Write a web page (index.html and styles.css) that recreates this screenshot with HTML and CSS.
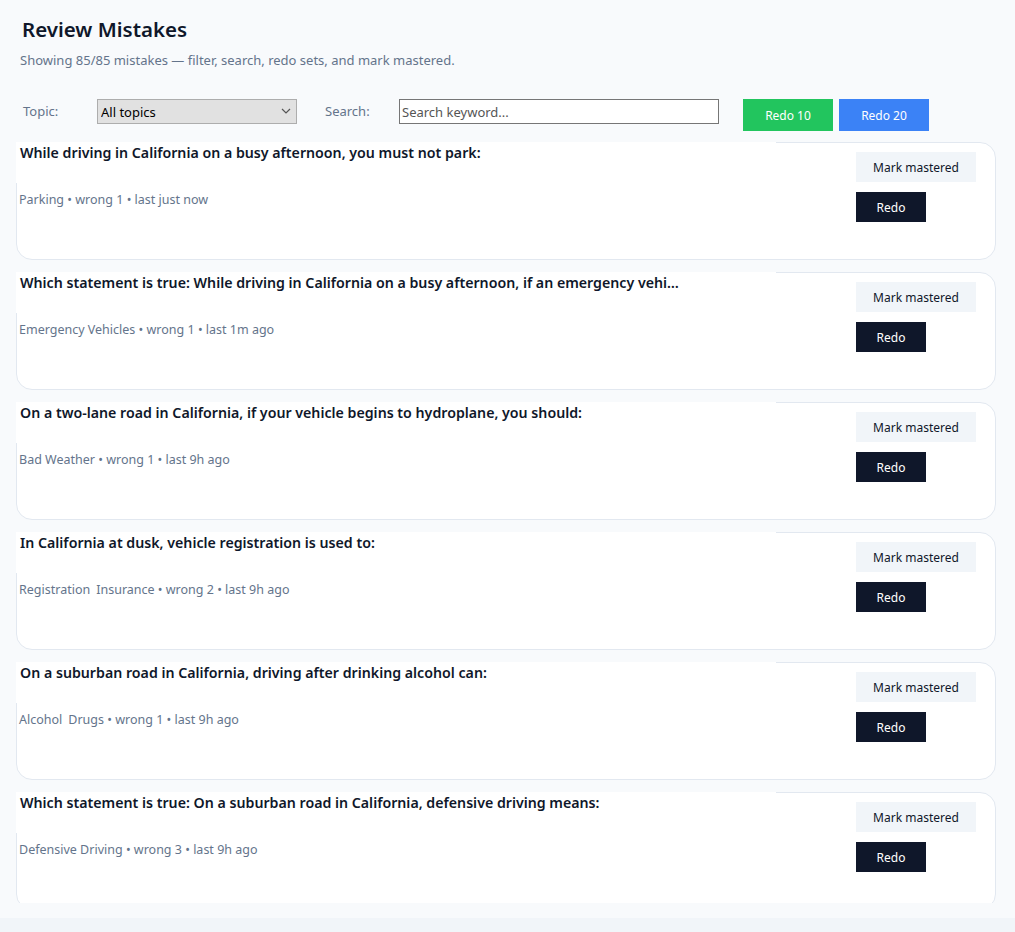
FILE: index.html
```html
<!DOCTYPE html>
<html lang="en">
<head>
<meta charset="utf-8">
<title>Review Mistakes</title>
<link rel="stylesheet" href="styles.css">
</head>
<body>
<div class="app">
  <header class="head">
    <h1 class="title">Review Mistakes</h1>
    <p class="subtitle">Showing 85/85 mistakes — filter, search, redo sets, and mark mastered.</p>
  </header>

  <div class="controls">
    <label class="ctl-label" for="topic">Topic:</label>
    <div class="select-wrap">
      <select id="topic" class="select">
        <option>All topics</option>
      </select>
      <svg class="chevron" width="10" height="6" viewBox="0 0 10 6" aria-hidden="true"><path d="M1 1l4 4 4-4" fill="none" stroke="#555" stroke-width="1.2"/></svg>
    </div>
    <label class="ctl-label search-label" for="q">Search:</label>
    <input id="q" class="search" type="text" placeholder="Search keyword...">
    <button class="btn btn-green">Redo 10</button>
    <button class="btn btn-blue">Redo 20</button>
  </div>

  <div class="list">
    <article class="card">
      <div class="card-main">
        <div class="q">While driving in California on a busy afternoon, you must not park:</div>
        <div class="meta"><span class="tag">Parking</span> • wrong 1 • last just now</div>
      </div>
      <div class="actions">
        <button class="btn-mark">Mark mastered</button>
        <button class="btn-redo">Redo</button>
      </div>
    </article>

    <article class="card">
      <div class="card-main">
        <div class="q">Which statement is true: While driving in California on a busy afternoon, if an emergency vehi…</div>
        <div class="meta"><span class="tag">Emergency Vehicles</span> • wrong 1 • last 1m ago</div>
      </div>
      <div class="actions">
        <button class="btn-mark">Mark mastered</button>
        <button class="btn-redo">Redo</button>
      </div>
    </article>

    <article class="card">
      <div class="card-main">
        <div class="q">On a two-lane road in California, if your vehicle begins to hydroplane, you should:</div>
        <div class="meta"><span class="tag">Bad Weather</span> • wrong 1 • last 9h ago</div>
      </div>
      <div class="actions">
        <button class="btn-mark">Mark mastered</button>
        <button class="btn-redo">Redo</button>
      </div>
    </article>

    <article class="card">
      <div class="card-main">
        <div class="q">In California at dusk, vehicle registration is used to:</div>
        <div class="meta"><span class="tag">Registration</span><span class="tag">Insurance</span> • wrong 2 • last 9h ago</div>
      </div>
      <div class="actions">
        <button class="btn-mark">Mark mastered</button>
        <button class="btn-redo">Redo</button>
      </div>
    </article>

    <article class="card">
      <div class="card-main">
        <div class="q">On a suburban road in California, driving after drinking alcohol can:</div>
        <div class="meta"><span class="tag">Alcohol</span><span class="tag">Drugs</span> • wrong 1 • last 9h ago</div>
      </div>
      <div class="actions">
        <button class="btn-mark">Mark mastered</button>
        <button class="btn-redo">Redo</button>
      </div>
    </article>

    <article class="card">
      <div class="card-main">
        <div class="q">Which statement is true: On a suburban road in California, defensive driving means:</div>
        <div class="meta"><span class="tag">Defensive Driving</span> • wrong 3 • last 9h ago</div>
      </div>
      <div class="actions">
        <button class="btn-mark">Mark mastered</button>
        <button class="btn-redo">Redo</button>
      </div>
    </article>
  </div>
</div>
</body>
</html>
```

FILE: styles.css
```css
* {
  box-sizing: border-box;
}

html, body {
  margin: 0;
  padding: 0;
}

body {
  background: #f1f5f9;
  font-family: "Noto Sans", "Open Sans", sans-serif;
  color: #0f172a;
}

.app {
  height: 918px;
  background: #f8fafc;
  display: flex;
  flex-direction: column;
  padding: 14px 19px 15px 16px;
}

.head {
  padding-left: 6px;
}

.title {
  margin: 0;
  font-size: 20.5px;
  line-height: 30px;
  font-weight: 600;
}

.subtitle {
  margin: 7px 0 0 -2px;
  font-size: 13px;
  line-height: 18px;
  color: #64748b;
}

/* filter row */
.controls {
  display: flex;
  align-items: flex-start;
  margin-top: 30px;
  padding-left: 7px;
}

.ctl-label {
  width: 74px;
  font-size: 13px;
  line-height: 25px;
  color: #64748b;
}

.search-label {
  margin-left: 28px;
}

.select-wrap {
  position: relative;
  width: 200px;
  height: 25px;
}

.select {
  appearance: none;
  -webkit-appearance: none;
  width: 100%;
  height: 25px;
  margin: 0;
  padding: 0 20px 0 3px;
  background: #e1e1e1;
  border: 1px solid #adadad;
  border-radius: 0;
  font-family: inherit;
  font-size: 13px;
  color: #000;
}

.chevron {
  position: absolute;
  right: 6px;
  top: 9px;
  pointer-events: none;
}

.search {
  width: 320px;
  height: 25px;
  margin: 0;
  padding: 0 2px;
  border: 1px solid #767676;
  border-radius: 0;
  background: #fff;
  font-family: inherit;
  font-size: 13px;
  color: #000;
}

.search::placeholder {
  color: #555;
}

.btn {
  width: 90px;
  height: 32px;
  border: 0;
  border-radius: 0;
  color: #fff;
  font-family: inherit;
  font-size: 12px;
  padding: 0;
}

.btn-green {
  margin-left: 24px;
  background: #22c55e;
}

.btn-blue {
  margin-left: 6px;
  background: #3b82f6;
}

/* mistake cards */
.list {
  flex: 1;
  overflow: hidden;
  margin-top: 11px;
  display: flex;
  flex-direction: column;
  gap: 12px;
}

.card {
  flex-shrink: 0;
  display: flex;
  justify-content: space-between;
  min-height: 118px;
  background: #fff;
  border: 1px solid #e2e8f0;
  border-radius: 16px;
}

.card-main {
  width: 760px;
  margin: -1px 0 0 -1px;
}

.q {
  height: 41px;
  padding: 0 4px;
  background: #fff;
  font-size: 14.2px;
  line-height: 22px;
  font-weight: 600;
  color: #0f172a;
}

.meta {
  margin-top: 8px;
  padding-left: 3px;
  font-size: 12.5px;
  line-height: 18px;
  color: #64748b;
}

.tag {
  margin-right: 6px;
}

.tag:last-child {
  margin-right: 0;
}

.actions {
  display: flex;
  flex-direction: column;
  align-items: flex-start;
  gap: 10px;
  padding: 9px 19px 0 0;
}

.btn-mark,
.btn-redo {
  height: 30px;
  border: 0;
  border-radius: 0;
  padding: 0;
  font-family: inherit;
  font-size: 12px;
}

.btn-mark {
  width: 120px;
  background: #f1f5f9;
  color: #0f172a;
}

.btn-redo {
  width: 70px;
  background: #0f172a;
  color: #fff;
}
```
